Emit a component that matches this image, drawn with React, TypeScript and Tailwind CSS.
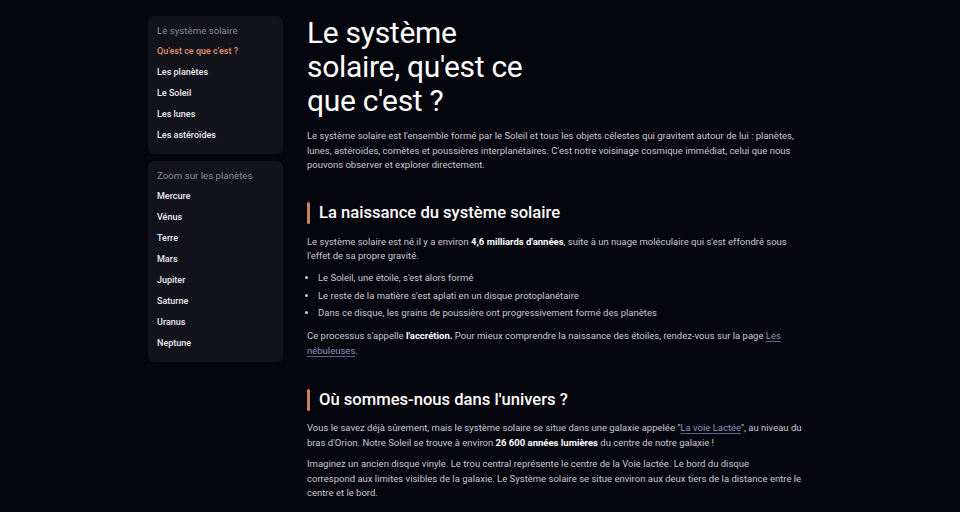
import React from "react";

const solarLinks = ["Qu'est ce que c'est ?", "Les planètes", "Le Soleil", "Les lunes", "Les astéroïdes"];
const planets = ["Mercure", "Vénus", "Terre", "Mars", "Jupiter", "Saturne", "Uranus", "Neptune"];

function NavPanel({ title, items, active }: { title: string; items: string[]; active?: number }) {
  return (
    <div className="rounded-md bg-[#12121b] px-[9px] pt-[4px] pb-[8px]">
      <div className="h-[21px] text-[9.7px] leading-[21px] text-[#8a8a96]">{title}</div>
      <ul>
        {items.map((it, i) => (
          <li
            key={it}
            className={`h-[21px] text-[9px] font-medium leading-[21px] ${i === active ? "text-[#e0926a]" : "text-[#ececf0]"}`}
          >
            {it}
          </li>
        ))}
      </ul>
    </div>
  );
}

function SectionTitle({ children }: { children: React.ReactNode }) {
  return (
    <h2 className="flex items-center gap-[9px] text-[16.6px] font-medium leading-[24px] text-white">
      <span className="h-[22px] w-[3px] rounded-sm bg-[#c98160]" />
      {children}
    </h2>
  );
}

const linkCls = "text-[#8c94bd] underline decoration-[#5f668c] underline-offset-2";

export default function App() {
  return (
    <div
      className="min-h-[512px] w-full bg-[#05050d] text-[#c9c9d1]"
      style={{ fontFamily: "Roboto, 'Noto Sans', sans-serif" }}
    >
      <div className="mx-auto flex w-[664px] gap-[24px] pt-[16px]">
        <aside className="flex w-[135px] shrink-0 flex-col gap-[7px]">
          <NavPanel title="Le système solaire" items={solarLinks} active={0} />
          <NavPanel title="Zoom sur les planètes" items={planets} />
        </aside>
        <main className="w-[497px] text-[9.5px] leading-[14.5px]">
          <h1 className="w-[240px] text-[30px] font-normal leading-[34px] tracking-[-0.3px] text-white">
            Le système solaire, qu'est ce que c'est ?
          </h1>
          <p className="mt-[11px]">
            Le système solaire est l'ensemble formé par le Soleil et tous les objets célestes qui gravitent autour de lui : planètes,
            lunes, astéroïdes, comètes et poussières interplanétaires. C'est notre voisinage cosmique immédiat, celui que nous
            pouvons observer et explorer directement.
          </p>

          <div className="mt-[28px]">
            <SectionTitle>La naissance du système solaire</SectionTitle>
          </div>
          <p className="mt-[10px]">
            Le système solaire est né il y a environ <strong className="font-bold text-white">4,6 milliards d'années</strong>, suite à un
            nuage moléculaire qui s'est effondré sous l'effet de sa propre gravité.
          </p>
          <ul className="mt-[6px] list-disc pl-[11px]">
            <li className="py-[1.5px]">Le Soleil, une étoile, s'est alors formé</li>
            <li className="py-[1.5px]">Le reste de la matière s'est aplati en un disque protoplanétaire</li>
            <li className="py-[1.5px]">Dans ce disque, les grains de poussière ont progressivement formé des planètes</li>
          </ul>
          <p className="mt-[7px]">
            Ce processus s'appelle <strong className="font-bold text-white">l'accrétion.</strong> Pour mieux comprendre la naissance des
            étoiles, rendez-vous sur la page <a className={linkCls}>Les nébuleuses</a>.
          </p>

          <div className="mt-[30px]">
            <SectionTitle>Où sommes-nous dans l'univers ?</SectionTitle>
          </div>
          <p className="mt-[9px]">
            Vous le savez déjà sûrement, mais le système solaire se situe dans une galaxie appelée "
            <a className={linkCls}>La voie Lactée</a>", au niveau du bras d'Orion. Notre Soleil se trouve à environ{" "}
            <strong className="font-bold text-white">26 600 années lumières</strong> du centre de notre galaxie !
          </p>
          <p className="mt-[7px]">
            Imaginez un ancien disque vinyle. Le trou central représente le centre de la Voie lactée. Le bord du disque
            <br />
            correspond aux limites visibles de la galaxie. Le Système solaire se situe environ aux deux tiers de la distance entre le
            <br />
            centre et le bord.
          </p>
        </main>
      </div>
    </div>
  );
}
